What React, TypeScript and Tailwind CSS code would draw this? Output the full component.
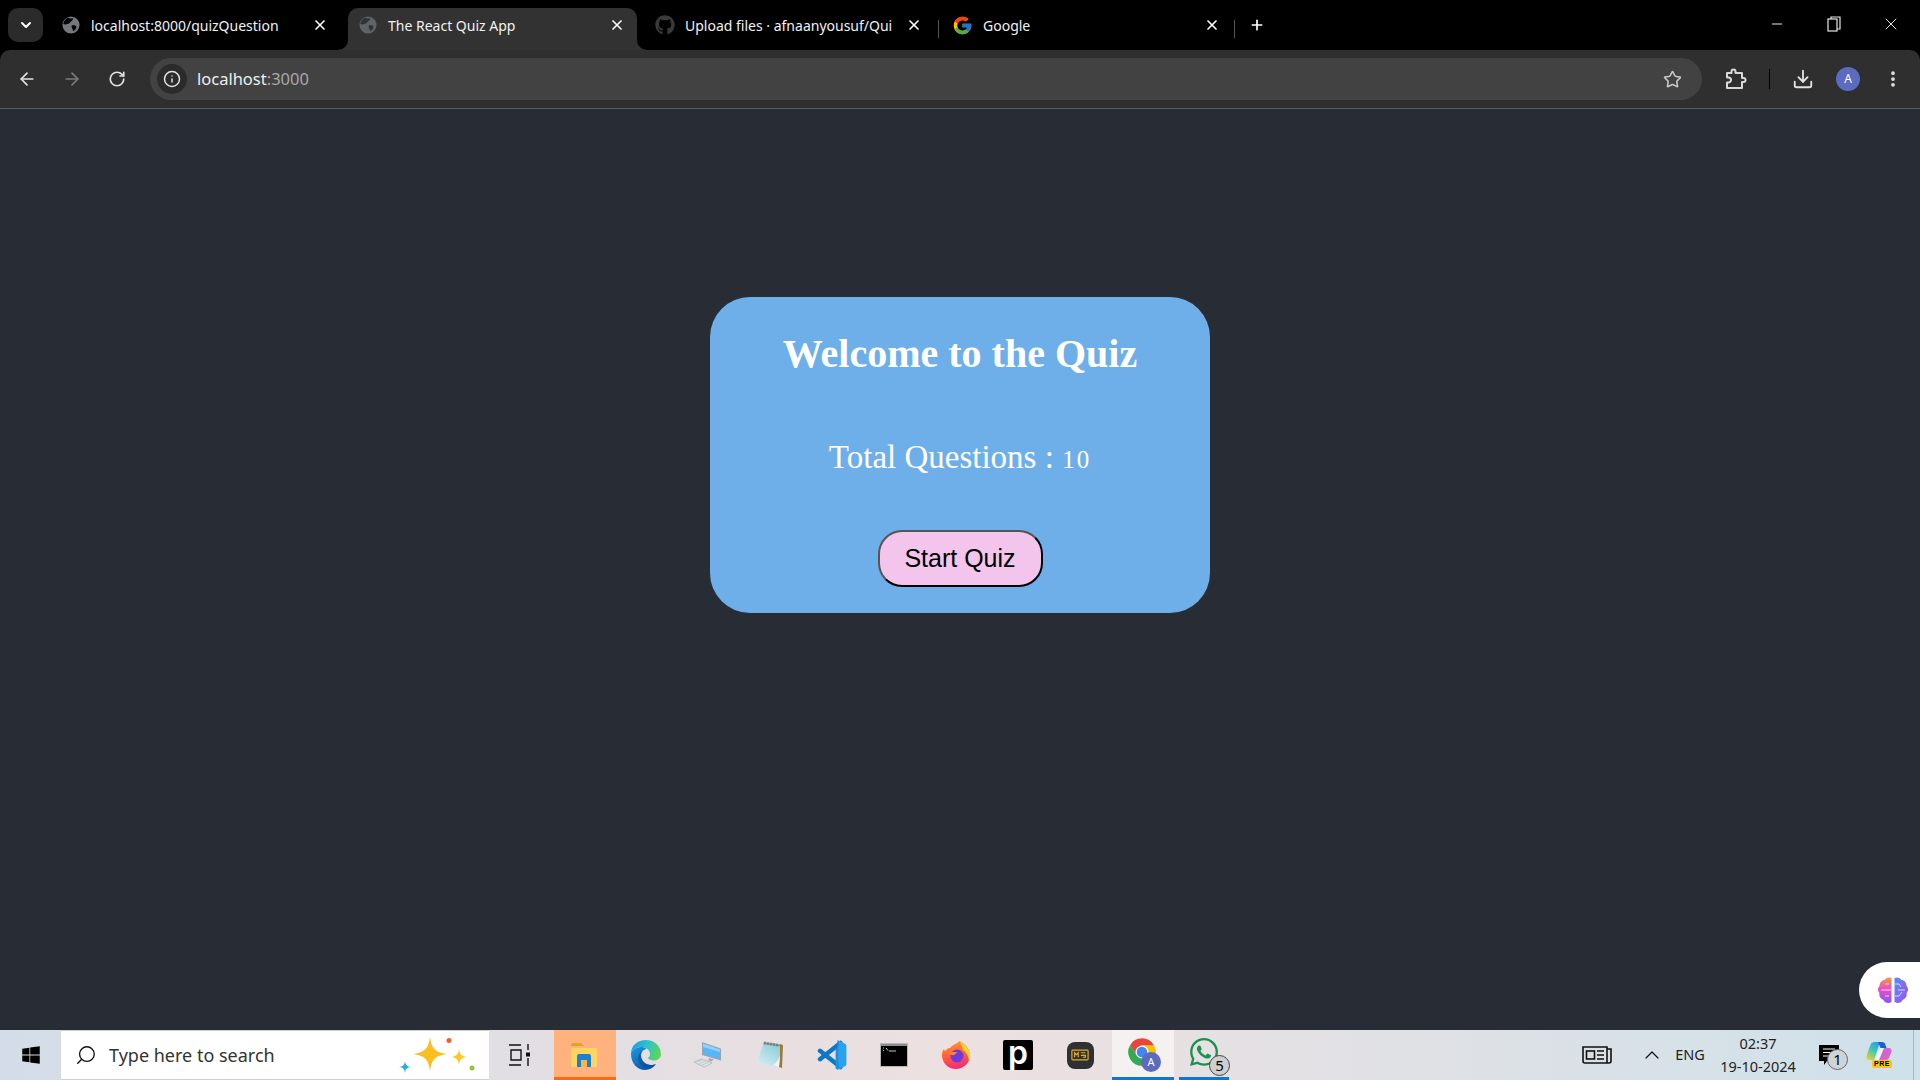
import { ArrowLeft, ArrowRight, ChevronDown, ChevronUp, Download, Info, Minus, MoreVertical, Plus, RotateCw, Search, Star, X } from 'lucide-react';
import { FaGithub, FaWindows, FaWhatsapp } from 'react-icons/fa';
import { FcGoogle } from 'react-icons/fc';

function GlobeIcon({ dim = false }: { dim?: boolean }) {
  return (
    <svg width="18" height="18" viewBox="0 0 20 20">
      <circle cx="10" cy="10" r="9.500" fill={dim ? '#5f6266' : '#75777b'} />
      <path d="M6.500 2c1.500 1 3.500 1 5.500.5 1 1-1 3-2 3.500s-1 2-3 2.500S3.500 10 1.500 9c0-2 2.500-6 5-7zM11 10.500c2-.5 4-.5 5 1.500.5 1-2 4-3 5-1-.5-1-2-1.500-3s-1.500-3-.5-3.500z" fill={dim ? '#323232' : '#000'} />
    </svg>
  );
}

function Tab({ icon, title, active = false }: { icon: React.ReactNode; title: string; active?: boolean }) {
  return (
    <div className={`relative mx-1 flex h-[42px] w-[289px] shrink-0 items-center pb-[8px] pl-[9px] pr-[12px] ${active ? 'rounded-t-[10px] bg-[#323232]' : ''}`}>
      {active && (
        <>
          <svg className="absolute -left-[10px] bottom-0" width="10" height="10"><path d="M10 0v10H0a10 10 0 0 0 10-10z" fill="#323232" /></svg>
          <svg className="absolute -right-[10px] bottom-0" width="10" height="10"><path d="M0 0v10h10A10 10 0 0 1 0 0z" fill="#323232" /></svg>
        </>
      )}
      <span className="flex w-[21px] shrink-0 justify-center">{icon}</span>
      <span className="ml-[10px] flex-1 whitespace-nowrap text-[14px] text-[#f1f1f1]">{title}</span>
      <X size={16} strokeWidth={2.5} className="ml-2 shrink-0 text-white" />
    </div>
  );
}

function ExtensionIcon() {
  return (
    <svg width="24" height="24" viewBox="0 0 24 24" fill="none" stroke="#d8d8d8" strokeWidth="2" strokeLinejoin="round">
      <path d="M4 6h4.500V4.500a2 2 0 0 1 4 0V6H19v5h1.500a2 2 0 0 1 0 4H19v6H4v-5.500h1.500a2.500 2.500 0 0 0 0-5H4z" />
    </svg>
  );
}

function TaskViewIcon() {
  return (
    <svg width="22" height="24" viewBox="0 0 22 24" fill="none" stroke="#111" strokeWidth="1.400">
      <path d="M1 2h12M1 22h12M3 7h10v10H3zM20 1v6M20 15v8" />
      <rect x="18" y="9.500" width="4" height="4" fill="#111" stroke="none" />
    </svg>
  );
}

function ExplorerIcon() {
  return (
    <svg width="28" height="28" viewBox="0 0 28 28">
      <path d="M1 4a2 2 0 0 1 2-2h8l3 3H1z" fill="#e5a41b" />
      <path d="M1 7h26v18a1 1 0 0 1-1 1H2a1 1 0 0 1-1-1z" fill="#ffd561" />
      <path d="M7 26V15a2 2 0 0 1 2-2h10a2 2 0 0 1 2 2v11h-4v-7h-6v7z" fill="#1e7ed0" />
      <rect x="11" y="19" width="6" height="7" fill="#f6b73c" />
    </svg>
  );
}

function EdgeIcon() {
  return (
    <svg width="32" height="32" viewBox="0 0 32 32">
      <defs>
        <linearGradient id="edgeA" x1="0" y1="0.300" x2="1" y2="0.600">
          <stop offset="0" stopColor="#1b9de2" />
          <stop offset="0.500" stopColor="#2fc4c9" />
          <stop offset="1" stopColor="#63d650" />
        </linearGradient>
        <linearGradient id="edgeB" x1="0.800" y1="1" x2="0" y2="0">
          <stop offset="0" stopColor="#0c4f9e" />
          <stop offset="1" stopColor="#1a9be4" />
        </linearGradient>
      </defs>
      <path d="M1 15C1 6 8 1 16 1c8 0 15 6 15 14 0 4-3 6.500-7 6.500-3 0-5.500-1-6-2.500 1-.8 2-2 2-4 0-4-4-7-9-7C6 8 1 11 1 15z" fill="url(#edgeA)" />
      <path d="M1 15c0-4 5-7 10-7 2 0 4 .6 5.500 2-3 .5-5.500 3-5.500 6.500C11 22 16 26 21 26c2 0 3.500-.4 5-1-2.700 3.800-6.500 6-11 6C7 31 1 24 1 15z" fill="url(#edgeB)" />
      <path d="M11 16.500c0 5.500 5 9.500 10 9.500 1.500 0 3-.2 5-1-2 2.500-4.500 4-8 4-5 0-10-4-10-10 0-3 1.500-5.500 4.500-7-.9 1.200-1.500 2.700-1.500 4.500z" fill="#0b4a94" opacity="0.550" />
    </svg>
  );
}

function PcIcon() {
  return (
    <svg width="30" height="28" viewBox="0 0 30 28">
      <path d="M9 1l19 6.500v12L9 14z" fill="#9aa3ab" />
      <path d="M10 2.500l17 6v9.500L10 13z" fill="#58b6f4" />
      <path d="M10 2.500l17 6v2.500L10 6z" fill="#8fd3fb" />
      <path d="M16 17l5 1.500-3 2-3-1z" fill="#a5adb5" />
      <path d="M1 21l8-3 10 4-8 4z" fill="#e4e7ea" stroke="#a5adb5" strokeWidth="0.700" />
      <path d="M3.500 21l7-2.500M6 22.500l7-2.500M8.500 24l7-2.500" stroke="#b1b8bf" strokeWidth="0.700" />
    </svg>
  );
}

function NotepadIcon() {
  return (
    <svg width="28" height="28" viewBox="0 0 28 28">
      <defs>
        <linearGradient id="npA" x1="0.800" y1="0" x2="0.200" y2="1">
          <stop offset="0" stopColor="#8bcbd6" />
          <stop offset="1" stopColor="#d3eef2" />
        </linearGradient>
      </defs>
      <path d="M24 3l3 1-1 23-3-1z" fill="#9b7a3c" />
      <path d="M8 1l16 2.500L23 26 1 22z" fill="url(#npA)" />
      <path d="M24 14l-1 12-7-2c3 0 6-4 8-10z" fill="#f1f4f5" />
      <path d="M8 1l16 2.500v2L7 3z" fill="#8a9ba1" />
      <path d="M9 .5v3M12 1v3M15 1.500v3M18 2v3M21 2.500v3" stroke="#556268" strokeWidth="0.800" />
    </svg>
  );
}

function VsCodeIcon() {
  return (
    <svg width="30" height="30" viewBox="0 0 100 100">
      <path d="M78 10L10 64M10 36l68 54" stroke="#0f76c3" strokeWidth="15" strokeLinecap="round" fill="none" />
      <path d="M70 1l25 12c2 1 3 3 3 5v64c0 2-1 4-3 5L70 99c2-2 3-4 3-7V8c0-3-1-5-3-7z" fill="#2aa3ee" />
      <path d="M68 1l5 2v94l-5 2-6-4V30l6-5z" fill="#1e90e0" />
    </svg>
  );
}

function TerminalIcon() {
  return (
    <svg width="28" height="24" viewBox="0 0 28 24">
      <rect x="0.500" y="0.500" width="27" height="23" fill="#000" stroke="#b5b5b5" />
      <rect x="1" y="1" width="26" height="2" fill="#8a8d91" />
      <path d="M3 5h1M3 7.500h1M6 5l2 2.500M9 8h7" stroke="#ddd" strokeWidth="0.900" />
    </svg>
  );
}

function FirefoxIcon() {
  return (
    <svg width="30" height="30" viewBox="0 0 30 30">
      <defs>
        <linearGradient id="ffA" x1="0.300" y1="0" x2="0.500" y2="1">
          <stop offset="0" stopColor="#ff9a2e" />
          <stop offset="0.550" stopColor="#ff5a3c" />
          <stop offset="1" stopColor="#f22a7c" />
        </linearGradient>
      </defs>
      <path d="M19 1c5 3 9 7 10 13 1 8-6 15-14 15S1 23 1 15c0-3 1-5 2-6l1 2.500c1-2 3-3.500 5-3.500 2-3 6-4 10-7z" fill="url(#ffA)" />
      <path d="M19 1c4 3 9 7 10 13 .4 3-.4 5-1 7-.5-5-3-9-6-11-1-3-2-6-3-9z" fill="#ffd334" />
      <circle cx="16" cy="16" r="6.500" fill="#7338dc" />
      <path d="M8 13c2-1.500 7-1 9-.5-2 .5-3 2-4 2.500-2 .5-4-.5-5-2z" fill="#ff8a2a" />
    </svg>
  );
}

function ChipIcon() {
  return (
    <div className="flex h-[27px] w-[27px] items-center justify-center rounded-[8px] bg-[#2f3033]">
      <svg width="18" height="12" viewBox="0 0 20 13" fill="none" stroke="#e4ad22" strokeWidth="1.300">
        <rect x="1" y="1" width="18" height="11" rx="1" />
        <path d="M4 9V4l2 2 2-2v5M11 4h5M11 7h5v2h-3" />
      </svg>
    </div>
  );
}

function ChromeIcon() {
  return (
    <svg width="30" height="30" viewBox="0 0 24 24">
      <path d="M21.530 6.500a11 11 0 0 0-19.060 0l5.200 8L12 7h9.530z" fill="#e8453c" />
      <path d="M2.470 6.500A11 11 0 0 0 12 23l4.330-8.500H7.670z" fill="#34a853" />
      <path d="M12 23A11 11 0 0 0 21.530 6.500H12l4.330 8z" fill="#fbbc04" />
      <circle cx="12" cy="12" r="5.200" fill="#fff" />
      <circle cx="12" cy="12" r="4.200" fill="#4285f4" />
    </svg>
  );
}

function Sparkles() {
  const star = 'M0-10C1-3 3-1 10 0 3 1 1 3 0 10-1 3-3 1-10 0-3-1-1-3 0-10z';
  return (
    <svg width="78" height="36" viewBox="0 0 78 36">
      <path d={star} transform="translate(31 17) scale(1.700)" fill="#fbbe1e" />
      <path d={star} transform="translate(60 20) scale(0.800)" fill="#fbc62b" />
      <path d={star} transform="translate(6 30) scale(0.600)" fill="#27a9ea" />
      <circle cx="50" cy="3.500" r="2.500" fill="#f1602a" />
      <circle cx="73" cy="31" r="2.500" fill="#8cc63f" />
    </svg>
  );
}

function BrainIcon() {
  return (
    <svg width="30" height="28" viewBox="0 0 30 28">
      <defs>
        <linearGradient id="brA" x1="0" y1="0" x2="0" y2="1">
          <stop offset="0" stopColor="#f59a3e" />
          <stop offset="0.450" stopColor="#e94fc4" />
          <stop offset="1" stopColor="#8a55ee" />
        </linearGradient>
        <linearGradient id="brB" x1="0" y1="0" x2="1" y2="1">
          <stop offset="0" stopColor="#5a8cf2" />
          <stop offset="1" stopColor="#a04ff0" />
        </linearGradient>
      </defs>
      <path d="M13.500 2v24c-3 2-7 1-8-2-3-1-5-4-4-7-2-2-2-5 0-7 0-4 3-6 5-6 2-3 5-3 7-2z" fill="url(#brA)" />
      <path d="M16.500 2v24c3 2 7 1 8-2 3-1 5-4 4-7 2-2 2-5 0-7 0-4-3-6-5-6-2-3-5-3-7-2z" fill="url(#brB)" />
      <path d="M3 14h10M7 8h4M7 20h4M17 8h4l2 3M17 20h4l3-4M20 14h7" stroke="#fff" strokeOpacity="0.700" strokeWidth="1" fill="none" />
    </svg>
  );
}

function CopilotIcon() {
  return (
    <div className="relative h-[26px] w-[26px]">
      <svg width="26" height="19" viewBox="0 0 26 19">
        <defs>
          <linearGradient id="coA" x1="0.700" y1="0" x2="0.200" y2="1">
            <stop offset="0" stopColor="#2b9df0" />
            <stop offset="0.450" stopColor="#3fc7b0" />
            <stop offset="1" stopColor="#d7d73c" />
          </linearGradient>
          <linearGradient id="coB" x1="0" y1="0" x2="1" y2="1">
            <stop offset="0" stopColor="#b46ae6" />
            <stop offset="1" stopColor="#ee62b6" />
          </linearGradient>
        </defs>
        <path d="M9 0h5l-6 18H3c-2 0-3-2-2.500-4L4 4c.6-2.500 2.500-4 5-4z" fill="url(#coA)" />
        <path d="M12 0h4c2 0 3 1 3.500 3l1 3h-6z" fill="#1f5fd0" />
        <path d="M14 6h9c2 0 3 2 2.500 4L23 16c-.5 1.500-2 2-3 2h-9z" fill="url(#coB)" />
        <path d="M14 6h4l-5 12H9z" fill="#eef4f6" />
      </svg>
      <span className="absolute bottom-0 left-[6px] rounded-[2px] bg-[#fbc41a] px-[2px] font-['Liberation_Sans',sans-serif] text-[7px] font-bold leading-[8px] tracking-[0.5px] text-black">PRE</span>
    </div>
  );
}

function Tile({ children, bg = '', bar = '' }: { children: React.ReactNode; bg?: string; bar?: string }) {
  return (
    <div className={`relative flex h-[50px] w-[62px] shrink-0 items-center justify-center pr-[2px] ${bg}`}>
      {children}
      {bar && <div className={`absolute bottom-0 h-[3px] ${bar}`} />}
    </div>
  );
}

export default function App() {
  return (
    <div className="flex h-[1080px] w-[1920px] flex-col overflow-hidden bg-black font-['Noto_Sans',sans-serif]">
      {/* tab strip */}
      <div className="flex h-[50px] shrink-0 items-end">
        <div className="mb-[8px] ml-[8px] mr-[4px] flex h-[34px] w-[35px] shrink-0 items-center justify-center rounded-[10px] bg-[#2b2b2b]">
          <ChevronDown size={16} strokeWidth={3} className="text-white" />
        </div>
        <Tab icon={<GlobeIcon />} title="localhost:8000/quizQuestion" />
        <Tab icon={<GlobeIcon dim />} title="The React Quiz App" active />
        <Tab icon={<FaGithub size={20} className="text-[#3a3a3a]" />} title="Upload files · afnaanyousuf/Qui" />
        <div className="mb-[12px] h-[18px] w-px shrink-0 bg-[#555]" />
        <Tab icon={<FcGoogle size={21} />} title="Google" />
        <div className="-ml-[2px] mb-[12px] h-[18px] w-px shrink-0 bg-[#555]" />
        <div className="mb-[16px] ml-[14px] flex w-[16px] justify-center">
          <Plus size={18} strokeWidth={2.5} className="text-white" />
        </div>
        <div className="ml-auto mb-[16px] flex items-center text-[#e8e8e8]">
          <Minus size={16} strokeWidth={1.5} />
          <svg className="ml-[42px]" width="14" height="16" viewBox="0 0 14 16" fill="none" stroke="#e8e8e8" strokeWidth="1.200">
            <rect x="1" y="3" width="9" height="12" />
            <path d="M4 3V1h9v12h-3" />
          </svg>
          <X size={20} strokeWidth={1.2} className="ml-[40px] mr-[19px]" />
        </div>
      </div>

      {/* toolbar */}
      <div className="flex h-[59px] shrink-0 items-center rounded-t-[10px] border-b border-[#5c5c5c] bg-[#2f2f2f] pb-px">
        <div className="flex w-[150px] shrink-0 items-center pl-[17px]">
          <ArrowLeft size={20} className="text-[#e3e3e3]" />
          <ArrowRight size={20} className="ml-[25px] text-[#7b7b7b]" />
          <RotateCw size={18} strokeWidth={2.2} className="ml-[26px] text-[#e3e3e3]" />
        </div>
        <div className="flex h-[42px] w-[1552px] shrink-0 items-center rounded-full bg-[#424242] pl-[7px] pr-[20px]">
          <div className="flex h-[30px] w-[30px] items-center justify-center rounded-full bg-[#2b2b2b]">
            <Info size={18} className="text-[#e3e3e3]" />
          </div>
          <span className="ml-[10px] pt-[2px] text-[16.5px] text-[#eeeeee]">localhost<span className="text-[#a8a8a8]">:3000</span></span>
          <Star size={19} className="ml-auto mt-[2px] text-[#c8c8c8]" />
        </div>
        <div className="flex flex-1 items-center">
          <div className="ml-[21px]"><ExtensionIcon /></div>
          <div className="ml-[22px] h-[20px] w-px bg-black" />
          <Download size={22} className="ml-[22px] text-[#e3e3e3]" />
          <div className="ml-[22px] flex h-[24px] w-[24px] items-center justify-center rounded-full bg-[#5c6bc0] text-[12px] text-white">A</div>
          <MoreVertical size={20} strokeWidth={2.5} className="ml-[23px] text-[#e3e3e3]" />
        </div>
      </div>

      {/* page */}
      <main className="relative flex flex-1 flex-col items-center bg-[#282c34] pt-[188px]">
        <div className="flex h-[316px] w-[500px] flex-col items-center rounded-[40px] bg-[#6eafe9] pt-[34px]">
          <h1 className="font-['Liberation_Serif',serif] text-[40px] font-bold leading-[46px] text-white">Welcome to the Quiz</h1>
          <p className="mt-[62px] font-['Liberation_Serif',serif] text-[33px] leading-[37px] text-white">Total Questions : <span className="text-[25px] tracking-[2px]">10</span></p>
          <button className="mt-[52px] h-[57px] w-[165px] rounded-[24px] border-2 border-t-[#555] border-l-[#555] border-r-black border-b-black bg-[#f3c5ed] font-['Liberation_Sans',sans-serif] text-[25px] text-black">Start Quiz</button>
        </div>
        <div className="absolute bottom-[12px] right-0 flex h-[56px] w-[61px] items-center rounded-l-[28px] bg-white pl-[19px]">
          <BrainIcon />
        </div>
      </main>

      {/* taskbar */}
      <div className="flex h-[50px] shrink-0 items-center bg-gradient-to-r from-[#d3dce8] via-[#ede0e0] to-[#cfe1ea]">
        <div className="flex w-[61px] shrink-0 justify-center">
          <FaWindows size={20} className="text-black" />
        </div>
        <div className="flex h-[50px] w-[428px] shrink-0 items-center border-t border-b border-[#cfcfcf] bg-white pl-[14px] pr-[12px]">
          <Search size={22} strokeWidth={1.5} className="-scale-x-100 text-[#111]" />
          <span className="ml-[12px] text-[18px] text-[#333]">Type here to search</span>
          <div className="ml-auto"><Sparkles /></div>
        </div>
        <div className="flex w-[65px] shrink-0 justify-center pr-[6px]"><TaskViewIcon /></div>
        <Tile bg="bg-[#ffb27e]" bar="inset-x-0 bg-[#ff6a10]"><ExplorerIcon /></Tile>
        <Tile><EdgeIcon /></Tile>
        <Tile><PcIcon /></Tile>
        <Tile><NotepadIcon /></Tile>
        <Tile><VsCodeIcon /></Tile>
        <Tile><TerminalIcon /></Tile>
        <Tile><FirefoxIcon /></Tile>
        <Tile>
          <div className="flex h-[30px] w-[30px] items-center justify-center rounded-[2px] bg-black pb-[5px] font-['Inter',sans-serif] text-[32px] font-semibold text-white">p</div>
        </Tile>
        <Tile><ChipIcon /></Tile>
        <Tile bg="bg-[#f5f1f0]" bar="inset-x-0 bg-[#0a78d4]">
          <div className="relative -translate-y-[3px]">
            <ChromeIcon />
            <div className="absolute -bottom-[5px] -right-[4px] flex h-[20px] w-[20px] items-center justify-center rounded-full bg-[#5c6bc0] text-[11px] text-white">A</div>
          </div>
        </Tile>
        <Tile bar="left-[5px] right-[7px] bg-[#0a78d4]">
          <div className="relative -translate-y-[3px]">
            <FaWhatsapp size={32} className="text-[#1a9350]" />
            <div className="absolute -bottom-[8px] -right-[10px] flex h-[21px] w-[21px] items-center justify-center rounded-full border border-[#444] bg-[#cfcfcf] text-[15px] leading-none text-black">5</div>
          </div>
        </Tile>

        <div className="ml-auto flex h-[50px] items-center">
          <svg width="30" height="20" viewBox="0 0 30 20" fill="none" stroke="#111" strokeWidth="1.600">
            <path d="M1 2h24v16H3a2 2 0 0 1-2-2zM25 4h4v12a2 2 0 0 1-2 2h-2" />
            <rect x="4.500" y="6" width="8" height="8" />
            <path d="M15 6h7M15 10h7M15 14h7" />
          </svg>
          <div className="ml-[20px] flex w-[40px] justify-center"><ChevronUp size={24} strokeWidth={1.2} className="text-[#111]" /></div>
          <span className="w-[36px] text-center text-[14.5px] text-[#222]">ENG</span>
          <div className="ml-px flex w-[98px] flex-col items-center text-[14.5px] leading-[23px] text-[#222]">
            <span>02:37</span>
            <span>19-10-2024</span>
          </div>
          <div className="relative flex w-[44px] justify-center">
            <svg width="20" height="22" viewBox="0 0 20 22">
              <path d="M0 1h20v16H8l-3 4v-4H0z" fill="#000" />
              <path d="M4 5h12M4 8.500h12M4 12h8" stroke="#fff" strokeWidth="1" />
            </svg>
            <div className="absolute -bottom-[4px] right-[3px] flex h-[21px] w-[21px] items-center justify-center rounded-full border border-[#666] bg-[#cfd4d8] text-[15px] leading-none text-black">1</div>
          </div>
          <div className="flex h-[50px] w-[63px] items-center justify-center border-r border-[#a9b8c4] pr-[6px]"><CopilotIcon /></div>
          <div className="w-[6px]" />
        </div>
      </div>
    </div>
  );
}
